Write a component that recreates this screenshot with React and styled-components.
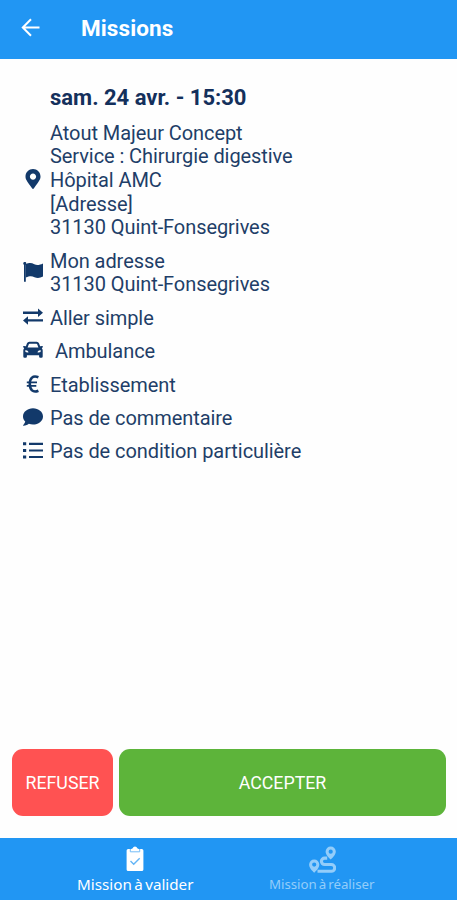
import React from 'react';
import styled, { createGlobalStyle } from 'styled-components';
import { FaMapMarkerAlt, FaComment } from 'react-icons/fa';

const GlobalStyle = createGlobalStyle`
  * {
    box-sizing: border-box;
  }

  body {
    margin: 0;
    background: #fefefe;
    font-family: Roboto, sans-serif;
  }
`;

// Layout
const Screen = styled.div`
  display: flex;
  flex-direction: column;
  height: 100vh;
  overflow: hidden;
`;

const Header = styled.header`
  display: flex;
  align-items: center;
  gap: 39px;
  height: 58.5px;
  padding: 0 20px 2px;
  background: #2196f3;
  color: #fff;
`;

const BackButton = styled.button`
  display: flex;
  padding: 0;
  border: 0;
  background: none;
  color: inherit;
`;

const Title = styled.h1`
  margin: 0;
  font-size: 22.5px;
  font-weight: 700;
  line-height: 28px;
  letter-spacing: 0.1px;
`;

const Content = styled.main`
  flex: 1;
  padding: 26px 22px 0;
  color: #1f3e68;
`;

const MissionDate = styled.h2`
  margin: 0 0 11px 28px;
  font-size: 22px;
  font-weight: 700;
  line-height: 26px;
  color: #14305c;
`;

const Row = styled.div`
  display: flex;
  align-items: center;
  margin-bottom: 9.7px;
`;

const RowIcon = styled.span`
  display: flex;
  justify-content: center;
  width: 22px;
  margin-right: 6px;
  padding-bottom: 3.4px;
  color: #12396a;

  svg {
    display: block;
    width: 20px;
    height: 20px;
  }
`;

const RowText = styled.div`
  padding-left: ${({ $indent }) => $indent || 0}px;
  font-size: 20px;
  line-height: 23.7px;
  letter-spacing: -0.07px;
  white-space: nowrap;
`;

const Actions = styled.div`
  display: flex;
  gap: 6px;
  padding: 0 11px 22px 12px;
`;

const ActionButton = styled.button`
  flex: ${({ $grow }) => ($grow ? 1 : '0 0 101px')};
  height: 67px;
  padding: 0;
  border: 0;
  border-radius: 11px;
  background: ${({ $color }) => $color};
  color: #fff;
  font-family: inherit;
  font-size: 17.8px;
`;

const TabBar = styled.nav`
  display: flex;
  height: 62px;
  padding: 0 42px;
  background: #2196f3;
`;

const Tab = styled.div`
  flex: 1;
  display: flex;
  flex-direction: column;
  align-items: center;
  padding-top: 7px;
  color: ${({ $active }) => ($active ? '#fff' : '#93cdfa')};
  font-family: 'Noto Sans', sans-serif;
  font-size: ${({ $active }) => ($active ? 15.2 : 13.3)}px;
  line-height: 20px;
  word-spacing: -1.5px;
  white-space: nowrap;

  svg {
    height: 28px;
    margin-bottom: 1px;
  }
`;

// Icons
const BackIcon = () => (
  <svg width="22" height="22" viewBox="0 0 22 22" fill="none" stroke="currentColor" strokeWidth="2">
    <path d="M19.5 10.5H3M11 2.3L2.8 10.5L11 18.7" />
  </svg>
);

const FlagIcon = () => (
  <svg viewBox="0 0.6 20 20" fill="currentColor">
    <circle cx="1.8" cy="2" r="1.5" />
    <path d="M1 1.6H2.8V20.4H1Z" />
    <path d="M2.8 2.8C6.5 1.1 8.8 1.6 11.3 2.9C14 4.2 16.7 3.6 20 2.1V15.1C17 16.8 14.2 17 11.5 15.8C8.8 14.6 6.5 14.6 2.8 16.2Z" />
  </svg>
);

const SwapIcon = () => (
  <svg viewBox="0 0.5 20 20" fill="currentColor">
    <path d="M0 5.1H15V2L20 6.2L15 10.4V7.4H0Z" />
    <path d="M20 12.8H5V9.8L0 14L5 18.2V15.1H20Z" />
  </svg>
);

const CarIcon = () => (
  <svg viewBox="0 0.3 20 20" fill="currentColor" fillRule="evenodd">
    <path d="M6.4 2H13.6Q15.4 2 16 3.6L17.1 6.5L19.2 6.3Q20 6.4 19.9 7.4L18.8 8.6Q19.7 9.4 19.7 10.8V16.8Q19.7 18 18.5 18H17.3Q16.1 18 16.1 16.8V15.6H3.9V16.8Q3.9 18 2.7 18H1.5Q.3 18 .3 16.8V10.8Q.3 9.4 1.2 8.6L.1 7.4Q0 6.4.8 6.3L2.9 6.5L4 3.6Q4.6 2 6.4 2ZM6.6 4.1Q5.9 4.1 5.7 4.8L4.6 7.9H15.4L14.3 4.8Q14.1 4.1 13.4 4.1ZM2.4 10.4V12.4Q4 13 5.7 12.6Q5 10.8 2.4 10.4ZM17.6 10.4Q15 10.8 14.3 12.6Q16 13 17.6 12.4Z" />
  </svg>
);

const EuroIcon = () => (
  <svg viewBox="0 0 20 20" fill="none" stroke="currentColor">
    <path d="M15.4 3.3C9.8.8 6.8 4.4 6.8 10C6.8 15.6 9.8 19.2 15.4 16.7" strokeWidth="2.6" />
    <path d="M3.8 8.3H14M3.8 11.8H13.3" strokeWidth="1.8" />
  </svg>
);

const ListIcon = () => (
  <svg viewBox="0 0.7 20 20" fill="currentColor">
    <path d="M0 2H3.2V5H0ZM0 8.7H3.2V11.7H0ZM0 15.3H3.2V18.3H0Z" />
    <path d="M6 2.5H20V4.6H6ZM6 9.1H20V11.2H6ZM6 15.7H20V17.8H6Z" />
  </svg>
);

const ClipboardIcon = () => (
  <svg width="18" height="28" viewBox="0 0 18 28">
    <path
      fill="currentColor"
      d="M2.2 4H5.3L6.7 3.3A2.4 2.4 0 0 1 11.3 3.3L12.7 4H15.8Q17.4 4 17.4 5.6V24.4Q17.4 26 15.8 26H2.2Q.6 26 .6 24.4V5.6Q.6 4 2.2 4Z"
    />
    <path d="M4.3 4V6.8H13.7V4" fill="none" stroke="#74bdf7" strokeWidth="1" />
    <path d="M4.5 16L7.7 19.2L13.7 13.2" fill="none" stroke="#64b5f6" strokeWidth="1.4" />
  </svg>
);

const RouteIcon = () => (
  <svg width="28" height="28" viewBox="-0.7 -0.3 28 28">
    <g fill="currentColor" fillRule="evenodd">
      <path d="M22 1.2A5.1 5.1 0 0 1 27.1 6.3C27.1 9.5 24 12.5 22 14.3C20 12.5 16.9 9.5 16.9 6.3A5.1 5.1 0 0 1 22 1.2ZM22 4.3A2.1 2.1 0 1 0 22 8.5A2.1 2.1 0 1 0 22 4.3Z" />
      <path d="M5.5 14.2A5.1 5.1 0 0 1 10.6 19.3C10.6 22.5 7.5 25.7 5.5 27.5C3.5 25.7.4 22.5.4 19.3A5.1 5.1 0 0 1 5.5 14.2ZM5.5 17.2A2.1 2.1 0 1 0 5.5 21.4A2.1 2.1 0 1 0 5.5 17.2Z" />
    </g>
    <path
      d="M18.5 12.8H15.9A3.2 3.2 0 0 0 15.9 19.2H22.6A3.4 3.4 0 0 1 22.6 26H8.8"
      fill="none"
      stroke="currentColor"
      strokeWidth="3.1"
    />
  </svg>
);

const details = [
  {
    id: 'pickup',
    icon: <FaMapMarkerAlt />,
    lines: [
      'Atout Majeur Concept',
      'Service : Chirurgie digestive',
      'Hôpital AMC',
      '[Adresse]',
      '31130 Quint-Fonsegrives'
    ]
  },
  { id: 'dropoff', icon: <FlagIcon />, lines: ['Mon adresse', '31130 Quint-Fonsegrives'] },
  { id: 'trip', icon: <SwapIcon />, lines: ['Aller simple'] },
  { id: 'vehicle', icon: <CarIcon />, lines: ['Ambulance'], indent: 5 },
  { id: 'payer', icon: <EuroIcon />, lines: ['Etablissement'] },
  { id: 'comment', icon: <FaComment />, lines: ['Pas de commentaire'] },
  { id: 'conditions', icon: <ListIcon />, lines: ['Pas de condition particulière'] }
];

const App = () => (
  <Screen>
    <GlobalStyle />
    <Header>
      <BackButton aria-label="Retour">
        <BackIcon />
      </BackButton>
      <Title>Missions</Title>
    </Header>

    <Content>
      <MissionDate>sam. 24 avr. - 15:30</MissionDate>
      {details.map((detail) => (
        <Row key={detail.id}>
          <RowIcon>{detail.icon}</RowIcon>
          <RowText $indent={detail.indent}>
            {detail.lines.map((line) => (
              <div key={line}>{line}</div>
            ))}
          </RowText>
        </Row>
      ))}
    </Content>

    <Actions>
      <ActionButton $color="#ff5252">REFUSER</ActionButton>
      <ActionButton $color="#5db43a" $grow>
        ACCEPTER
      </ActionButton>
    </Actions>

    <TabBar>
      <Tab $active>
        <ClipboardIcon />
        Mission à valider
      </Tab>
      <Tab>
        <RouteIcon />
        Mission à réaliser
      </Tab>
    </TabBar>
  </Screen>
);

export default App;
